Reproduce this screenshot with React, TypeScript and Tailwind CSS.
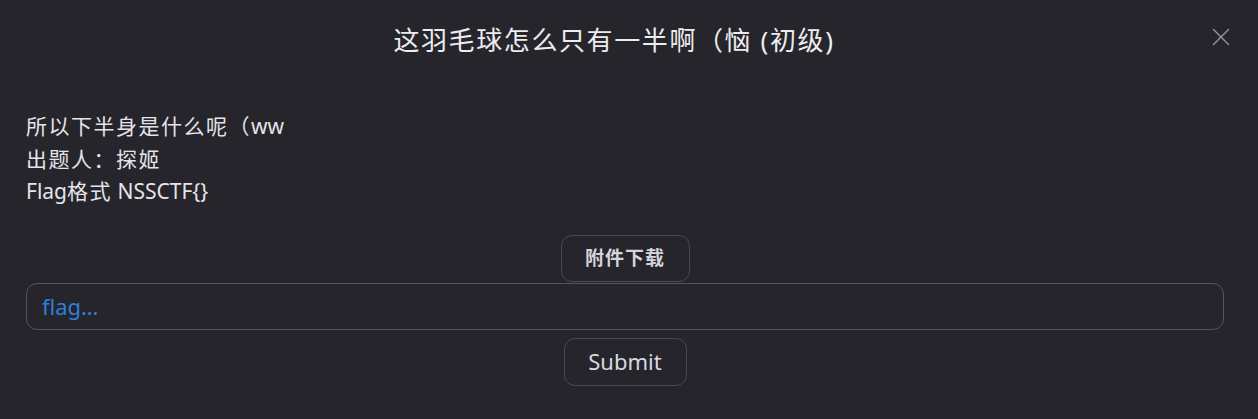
import { X } from "lucide-react";

export default function App() {
  return (
    <div
      className="h-[419px] w-full bg-[#26252b] text-[#e4e4ea]"
      style={{ fontFamily: '"Noto Sans", "Noto Sans CJK SC", sans-serif' }}
    >
      <div className="relative flex h-[80px] items-center justify-center pr-[30px]">
        <h1 className="text-[26px] font-normal tracking-[1.6px] text-[#ececf1]">这羽毛球怎么只有一半啊（恼 (初级)</h1>
        <button className="absolute right-[22px] top-[22px] text-[#96969d]">
          <X size={30} strokeWidth={1.1} />
        </button>
      </div>

      <div className="px-[26px] pt-[30px] text-[21px] leading-[32.5px]">
        <p>
          <span className="tracking-[1.5px]">所以下半身是什么呢（</span>ww
        </p>
        <p className="tracking-[1.5px]">出题人：探姬</p>
        <p>
          Flag<span className="tracking-[1.5px]">格式</span> NSSCTF{"{}"}
        </p>
      </div>

      <div className="flex flex-col items-center pl-[26px] pr-[34px] pt-[27px]">
        <button className="h-[47px] w-[129px] rounded-[11px] border border-[#4a4950] text-[19px] font-bold tracking-[1px] text-[#d4d4dc]">
          附件下载
        </button>
        <input
          className="mt-[1px] h-[47px] w-full rounded-[11px] border border-[#55545b] bg-transparent px-[15px] text-[22px] text-[#e4e4ea] outline-none placeholder:text-[#2f7fd8]"
          placeholder="flag…"
        />
        <button className="mt-[8px] h-[48px] w-[123px] rounded-[11px] border border-[#4a4950] text-[22px] text-[#d8d8e0]">
          Submit
        </button>
      </div>
    </div>
  );
}
